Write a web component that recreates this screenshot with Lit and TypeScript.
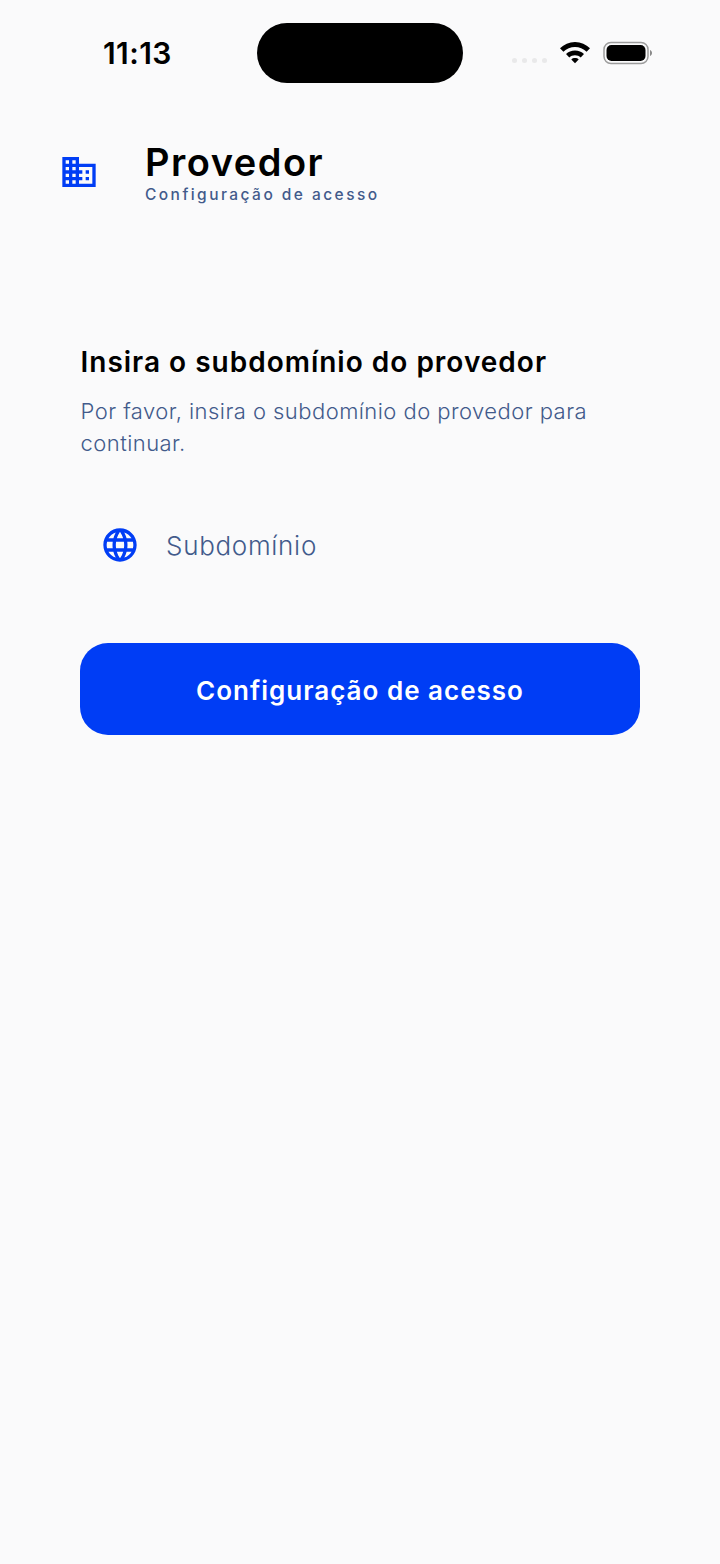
import { LitElement, html, css } from "lit";
import { customElement } from "lit/decorators.js";

@customElement("app-root")
export class AppRoot extends LitElement {
  static styles = css`
    :host {
      display: block;
      width: 720px;
      height: 1564px;
      background: #fafafb;
      font-family: Inter, "Noto Sans", sans-serif;
      overflow: hidden;
    }
    .status {
      height: 60px;
      padding-top: 23px;
      display: flex;
      align-items: flex-start;
    }
    .time {
      padding: 12px 0 0 103px;
      font-size: 30px;
      line-height: 36px;
      font-weight: 600;
      color: #000;
      letter-spacing: 0.4px;
      width: 154px;
    }
    .island {
      width: 206px;
      height: 60px;
      border-radius: 30px;
      background: #000;
    }
    .right {
      display: flex;
      align-items: center;
      height: 60px;
      margin-left: 49px;
    }
    .dots {
      display: flex;
      gap: 5px;
      margin-top: 14px;
    }
    .dots i {
      width: 5px;
      height: 5px;
      border-radius: 50%;
      background: #e9e9ea;
    }
    .wifi {
      margin-left: 12px;
      margin-top: -2px;
      display: block;
    }
    .battery {
      margin-left: 12px;
      margin-top: -1px;
      display: block;
    }
    .head {
      display: flex;
      align-items: center;
      margin-top: 57px;
      padding-left: 58.7px;
    }
    .head svg {
      width: 40px;
      height: 40px;
      fill: #003df5;
      display: block;
    }
    .titles {
      margin-left: 46.3px;
    }
    .title {
      font-size: 38px;
      line-height: 44px;
      font-weight: 600;
      color: #000;
      letter-spacing: 1.5px;
    }
    .sub {
      margin-top: 2px;
      font-size: 15.5px;
      line-height: 18px;
      font-weight: 500;
      color: #425a8b;
      letter-spacing: 2.45px;
    }
    .main {
      padding: 0 80px 0 80.5px;
      margin-top: 140px;
    }
    h1 {
      margin: 0;
      font-size: 28px;
      line-height: 36px;
      font-weight: 600;
      color: #000;
      letter-spacing: 1px;
    }
    p {
      margin: 15px 0 0;
      font-size: 22px;
      line-height: 32px;
      font-weight: 300;
      color: #425a8b;
      letter-spacing: 0.45px;
    }
    .field {
      display: flex;
      align-items: center;
      margin-top: 46px;
      padding-left: 19px;
      height: 80px;
    }
    .field svg {
      width: 40px;
      height: 40px;
      fill: #003df5;
      display: block;
    }
    .field span {
      margin-left: 26.5px;
      font-size: 26px;
      font-weight: 300;
      color: #425a8b;
      letter-spacing: 0.7px;
    }
    .btn {
      margin: 58px 0 0 -0.5px;
      box-sizing: border-box;
      padding-top: 2px;
      width: 560px;
      height: 92px;
      border-radius: 28px;
      background: #003df5;
      color: #fff;
      display: flex;
      align-items: center;
      justify-content: center;
      font-size: 26px;
      font-weight: 600;
      letter-spacing: 1px;
    }
  `;

  render() {
    return html`
      <div class="status">
        <div class="time">11:13</div>
        <div class="island"></div>
        <div class="right">
          <div class="dots"><i></i><i></i><i></i><i></i></div>
          <svg class="wifi" width="32" height="24" viewBox="0 0 32 24">
            <path d="M16 2C10 2 5 4.400 1 8.200l3.400 3.600C7.600 8.800 11.600 7 16 7s8.400 1.800 11.600 4.800L31 8.200C27 4.400 22 2 16 2z" />
            <path d="M16 10.500c-3.600 0-6.700 1.300-9 3.500l3.300 3.400c1.500-1.300 3.500-2.100 5.700-2.100s4.200.8 5.700 2.100L25 14c-2.300-2.200-5.400-3.500-9-3.500z" />
            <path d="M16 18c-1.500 0-2.800.5-3.700 1.400L16 23.200l3.700-3.800C18.800 18.500 17.500 18 16 18z" />
          </svg>
          <svg class="battery" width="50" height="24" viewBox="0 0 50 24">
            <rect x="1" y="1.500" width="44" height="21" rx="7" fill="none" stroke="#9c9c9c" stroke-width="1.500" />
            <rect x="3.500" y="4" width="39" height="16" rx="5" fill="#000" />
            <path d="M47 9v6c1.300-.5 2-1.700 2-3s-.7-2.500-2-3z" fill="#8a8a8a" />
          </svg>
        </div>
      </div>

      <div class="head">
        <svg viewBox="0 0 24 24">
          <path d="M12 7V3H2v18h20V7H12zM6 19H4v-2h2v2zm0-4H4v-2h2v2zm0-4H4V9h2v2zm0-4H4V5h2v2zm4 12H8v-2h2v2zm0-4H8v-2h2v2zm0-4H8V9h2v2zm0-4H8V5h2v2zm10 12h-8v-2h2v-2h-2v-2h2v-2h-2V9h8v10zm-2-8h-2v2h2v-2zm0 4h-2v2h2v-2z" />
        </svg>
        <div class="titles">
          <div class="title">Provedor</div>
          <div class="sub">Configuração de acesso</div>
        </div>
      </div>

      <div class="main">
        <h1>Insira o subdomínio do provedor</h1>
        <p>Por favor, insira o subdomínio do provedor para continuar.</p>
        <div class="field">
          <svg viewBox="0 0 24 24">
            <path d="M11.990 2C6.470 2 2 6.480 2 12s4.470 10 9.990 10C17.520 22 22 17.520 22 12S17.520 2 11.990 2zm6.930 6h-2.950c-.32-1.250-.78-2.450-1.380-3.560 1.840.63 3.370 1.910 4.330 3.560zM12 4.040c.83 1.200 1.480 2.530 1.910 3.960h-3.820c.43-1.430 1.080-2.760 1.910-3.960zM4.260 14C4.100 13.360 4 12.690 4 12s.1-1.360.26-2h3.380c-.08.66-.14 1.320-.14 2 0 .68.06 1.340.14 2H4.260zm.82 2h2.950c.32 1.250.78 2.450 1.380 3.560-1.840-.63-3.370-1.900-4.330-3.560zm2.950-8H5.080c.96-1.660 2.490-2.930 4.330-3.560C8.810 5.550 8.350 6.750 8.030 8zM12 19.960c-.83-1.200-1.480-2.530-1.910-3.960h3.820c-.43 1.430-1.080 2.760-1.910 3.960zM14.340 14H9.660c-.09-.66-.16-1.320-.16-2 0-.68.07-1.350.16-2h4.680c.09.65.16 1.320.16 2 0 .68-.07 1.340-.16 2zm.25 5.560c.6-1.110 1.060-2.310 1.380-3.560h2.950c-.96 1.650-2.490 2.930-4.330 3.560zM16.360 14c.08-.66.14-1.320.14-2 0-.68-.06-1.340-.14-2h3.380c.16.64.26 1.310.26 2s-.1 1.360-.26 2h-3.380z" />
          </svg>
          <span>Subdomínio</span>
        </div>
        <div class="btn">Configuração de acesso</div>
      </div>
    `;
  }
}
